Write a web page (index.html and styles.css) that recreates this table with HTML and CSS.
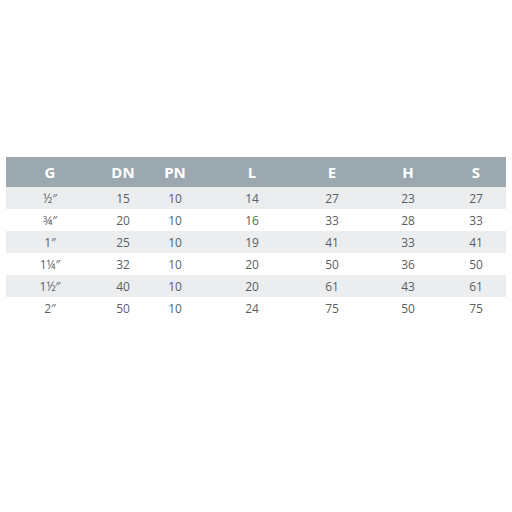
FILE: index.html
```html
<!DOCTYPE html>
<html>
<head>
<meta charset="utf-8">
<link rel="stylesheet" href="styles.css">
</head>
<body>
<div class="page">
  <div class="table">
    <div class="row head">
      <span>G</span><span>DN</span><span>PN</span><span>L</span><span>E</span><span>H</span><span>S</span>
    </div>
    <div class="row odd"><span>½″</span><span>15</span><span>10</span><span>14</span><span>27</span><span>23</span><span>27</span></div>
    <div class="row"><span>¾″</span><span>20</span><span>10</span><span>16</span><span>33</span><span>28</span><span>33</span></div>
    <div class="row odd"><span>1″</span><span>25</span><span>10</span><span>19</span><span>41</span><span>33</span><span>41</span></div>
    <div class="row"><span>1¼″</span><span>32</span><span>10</span><span>20</span><span>50</span><span>36</span><span>50</span></div>
    <div class="row odd"><span>1½″</span><span>40</span><span>10</span><span>20</span><span>61</span><span>43</span><span>61</span></div>
    <div class="row"><span>2″</span><span>50</span><span>10</span><span>24</span><span>75</span><span>50</span><span>75</span></div>
  </div>
</div>
</body>
</html>
```
FILE: styles.css
```css
html, body {
  margin: 0;
  padding: 0;
  background: #ffffff;
}
.page {
  padding: 157px 6px 0 6px;
  font-family: "Open Sans", "Liberation Sans", sans-serif;
}
.table {
  width: 500px;
}
.row {
  display: grid;
  grid-template-columns: 88px 58px 46px 108px 52px 100px 36px 12px;
  height: 22px;
  align-items: center;
  font-size: 12px;
  color: #5a5f63;
}
.row span {
  text-align: center;
}
.row.odd {
  background: #ebedef;
}
.row.head {
  height: 30px;
  background: #9ba8af;
  color: #ffffff;
  font-weight: 700;
  font-size: 15px;
}
```
